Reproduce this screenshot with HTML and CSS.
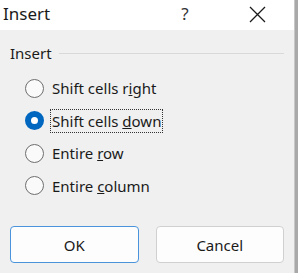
FILE: index.html
```html
<!DOCTYPE html>
<html lang="en">
<head>
  <meta charset="UTF-8">
  <title>Insert</title>
  <link rel="stylesheet" href="styles.css">
</head>
<body>
  <div class="dialog">
    <div class="titlebar">
      <span class="title">Insert</span>
      <span class="help">?</span>
      <span class="close">
        <svg width="17" height="17" viewBox="0 0 17 17"><path d="M1 1 L16 16 M16 1 L1 16" stroke="#1a1a1a" stroke-width="1.3" fill="none"/></svg>
      </span>
    </div>
    <div class="content">
      <div class="group-label"><span>Insert</span><div class="group-line"></div></div>
      <div class="options">
        <label class="option"><span class="radio"></span><span class="text">Shift cells r<u>i</u>ght</span></label>
        <label class="option selected"><span class="radio"></span><span class="text focus">Shift cells <u>d</u>own</span></label>
        <label class="option"><span class="radio"></span><span class="text">Entire <u>r</u>ow</span></label>
        <label class="option"><span class="radio"></span><span class="text">Entire <u>c</u>olumn</span></label>
      </div>
      <div class="buttons">
        <button class="btn btn-default">OK</button>
        <button class="btn">Cancel</button>
      </div>
    </div>
  </div>
</body>
</html>
```

FILE: styles.css
```css
html, body {
  margin: 0;
  padding: 0;
}
body {
  width: 298px;
  height: 273px;
  overflow: hidden;
  background: #a9a9a9;
  font-family: 'Noto Sans', 'Open Sans', sans-serif;
  color: #1a1a1a;
}
.dialog {
  width: 295px;
  height: 273px;
  background: #f0f0f0;
  border-right: 1px solid #c8c8c8;
  box-sizing: border-box;
}
.titlebar {
  height: 30px;
  background: #fff;
  display: flex;
  align-items: center;
}
.title {
  font-size: 17px;
  margin-left: 3px;
  margin-top: -4px;
}
.help {
  font-size: 17px;
  margin-left: 131px;
  margin-top: -4px;
  color: #333;
}
.close {
  margin-left: 60px;
  margin-top: -2px;
  display: flex;
}
.content {
  padding: 13px 10px 0 10px;
}
.group-label {
  display: flex;
  align-items: center;
  font-size: 15px;
  height: 20px;
}
.group-line {
  flex: 1;
  height: 1px;
  background: #d9d9d9;
  margin-left: 7px;
}
.options {
  display: flex;
  flex-direction: column;
  padding-left: 15px;
  margin-top: 9px;
}
.option {
  display: flex;
  align-items: center;
  height: 32.5px;
  font-size: 15px;
}
.radio {
  width: 19px;
  height: 19px;
  border: 1px solid #6e6e6e;
  border-radius: 50%;
  background: #fafafa;
  box-sizing: border-box;
  flex: none;
}
.selected .radio {
  border: 6px solid #0067c0;
  background: #fff;
}
.text {
  margin-left: 6px;
  padding: 1px 1px;
  border: 1px dotted transparent;
}
.text.focus {
  border-color: #333;
}
.buttons {
  display: flex;
  gap: 17px;
  margin-top: 24px;
}
.btn {
  width: 129px;
  height: 37px;
  background: #fdfdfd;
  border: 1px solid #d0d0d0;
  border-radius: 4px;
  font-family: 'Noto Sans', 'Open Sans', sans-serif;
  font-size: 15px;
  color: #1a1a1a;
}
.btn-default {
  border: 1.5px solid #4a94dc;
}
```
